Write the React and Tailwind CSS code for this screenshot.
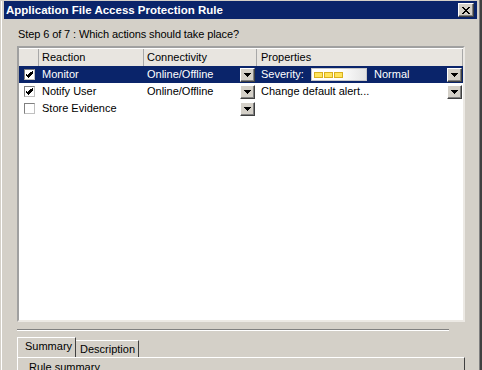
import React from "react";

const cols = ["w-[20px]", "w-[105px]", "w-[113px]", "w-[206px]"];

function DropBtn() {
  return (
    <div className="w-[15px] h-[14px] shrink-0 bg-[#d4d0c8] border-t border-l border-t-white border-l-white border-r border-b border-r-[#404040] border-b-[#404040] shadow-[inset_-1px_-1px_0_#808080] flex items-center justify-center">
      <svg width="7" height="4" viewBox="0 0 7 4" shapeRendering="crispEdges">
        <path d="M0 0h7v1h-1v1h-1v1h-1v1h-1v-1h-1v-1h-1v-1h-1z" fill="#000" />
      </svg>
    </div>
  );
}

function Check({ on }) {
  return (
    <div className="w-[11px] h-[11px] bg-white border border-t-[#808080] border-l-[#808080] border-r-[#c0c0c0] border-b-[#c0c0c0] flex items-center justify-center">
      {on && (
        <svg width="7" height="7" viewBox="0 0 7 7" shapeRendering="crispEdges">
          <path d="M6 0h1v3h-1v1h-1v1h-1v1h-1v1h-1v-1h-1v-1h-1v-1h-1v-2h1v1h1v1h1v-1h1v-1h1v-1h1z" fill="#000" />
        </svg>
      )}
    </div>
  );
}

function Severity() {
  return (
    <div className="w-[56px] h-[13px] border border-[#c8c8c8] bg-gradient-to-r from-white via-white to-[#e4e4e4] flex items-center gap-[1px] pl-[2px]">
      <div className="w-[9px] h-[6px] bg-[#ffe45c] border border-[#d8b020]" />
      <div className="w-[9px] h-[6px] bg-[#ffe45c] border border-[#d8b020]" />
      <div className="w-[9px] h-[6px] bg-[#ffe45c] border border-[#d8b020]" />
    </div>
  );
}

function Row({ on, label, conn, selected, props }) {
  const text = selected ? "text-white bg-[#0a246a]" : "text-black";
  return (
    <div className={`flex h-[17px] items-center ${text}`}>
      <div className={`${cols[0]} h-full flex items-center pl-[5px]`}>
        <Check on={on} />
      </div>
      <div className={`${cols[1]} h-full flex items-center pl-[3px]`}>{label}</div>
      <div className={`${cols[2]} h-full flex items-center justify-between pl-[3px] pr-[2px]`}>
        <span>{conn}</span>
        <DropBtn />
      </div>
      <div className={`${cols[3]} h-full flex items-center justify-between pl-[4px] pr-[1px]`}>
        {props}
      </div>
    </div>
  );
}

export default function App() {
  return (
    <div className="w-[482px] h-[370px] overflow-hidden bg-[#404040] font-['Tahoma','Liberation_Sans',sans-serif] text-[11px] leading-[13px] text-black">
      <div className="w-[480px] h-full border-r border-[#808080] bg-[#d4d0c8] flex flex-col pl-[1px] pt-[1px] pr-[2px]">
        <div className="h-full border-l border-white pl-[2px]">
          {/* title bar */}
          <div className="h-[18px] bg-[#0a246a] flex items-center justify-between pl-[2px] pr-[3px]">
            <span className="text-white font-bold text-[11.5px]">Application File Access Protection Rule</span>
            <div className="w-[16px] h-[14px] bg-[#d4d0c8] border-t border-l border-t-white border-l-white border-r border-b border-r-[#404040] border-b-[#404040] shadow-[inset_-1px_-1px_0_#808080] flex items-center justify-center">
              <svg width="8" height="7" viewBox="0 0 8 7" shapeRendering="crispEdges">
                <path d="M0 0h2v1h1v1h2v-1h1v-1h2v1h-1v1h-1v1h-1v1h1v1h1v1h1v1h-2v-1h-1v-1h-2v1h-1v1h-2v-1h1v-1h1v-1h1v-1h-1v-1h-1v-1h-1z" fill="#000" />
              </svg>
            </div>
          </div>

          <div className="pl-[13px]">
            <div className="mt-[9px] h-[14px] pl-[1px] tracking-[-0.1px]">Step 6 of 7 : Which actions should take place?</div>

            {/* list view */}
            <div className="mt-[4px] w-[448px] h-[276px] bg-white border-2 border-t-[#a0a0a0] border-l-[#a0a0a0] border-r-[#ece9e4] border-b-[#ece9e4]">
              <div className="flex h-[18px] bg-[#e8e5e0] border-t border-white">
                <div className={`${cols[0]} border-r border-[#a8a8a8]`} />
                <div className={`${cols[1]} border-r border-[#a8a8a8] pl-[3px] flex items-center`}>Reaction</div>
                <div className={`${cols[2]} border-r border-[#a8a8a8] pl-[3px] flex items-center`}>Connectivity</div>
                <div className={`${cols[3]} border-r border-[#a8a8a8] pl-[4px] flex items-center`}>Properties</div>
              </div>
              <Row
                on
                selected
                label="Monitor"
                conn="Online/Offline"
                props={
                  <>
                    <div className="flex items-center">
                      <span className="w-[50px]">Severity:</span>
                      <Severity />
                      <span className="ml-[7px]">Normal</span>
                    </div>
                    <DropBtn />
                  </>
                }
              />
              <Row
                on
                label="Notify User"
                conn="Online/Offline"
                props={
                  <>
                    <span>Change default alert...</span>
                    <DropBtn />
                  </>
                }
              />
              <Row label="Store Evidence" conn="" props={null} />
            </div>

            {/* separator */}
            <div className="mt-[7px] w-[432px] border-t border-[#808080] border-b border-b-white" />

            {/* tabs */}
            <div className="mt-[6px] w-[448px] flex items-end h-[20px]">
              <div className="h-[20px] w-[59px] bg-[#d4d0c8] border-t border-l border-white border-r border-r-[#404040] pl-[7px] pt-[2px] relative z-10">
                Summary
              </div>
              <div className="h-[17px] w-[63px] border-t border-white border-r border-r-[#404040] pl-[4px] pt-[2px]">
                Description
              </div>
              <div className="flex-1" />
            </div>
            <div className="w-[448px] h-[20px] border-t border-l border-white border-r border-r-[#404040] pl-[11px] pt-[3px]">
              Rule summary
            </div>
          </div>
        </div>
      </div>
    </div>
  );
}
